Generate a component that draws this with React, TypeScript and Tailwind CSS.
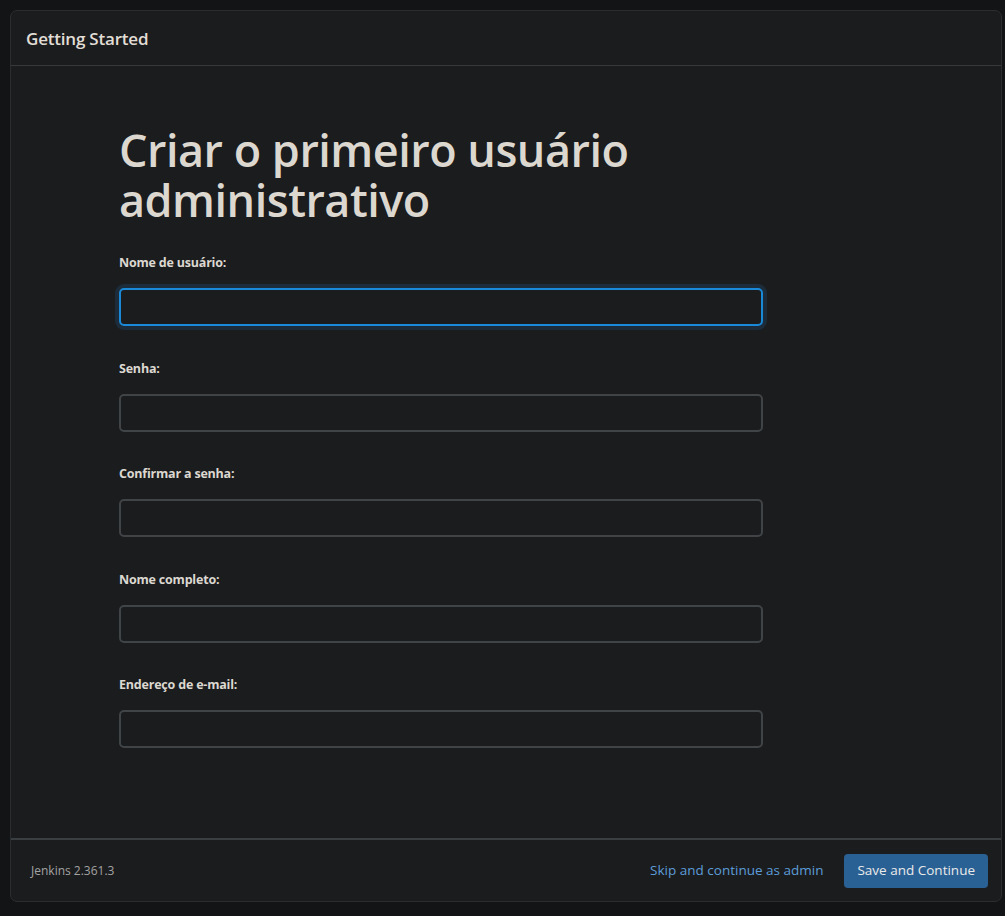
import React from "react";

const fields = [
  { label: "Nome de usuário:", type: "text", focus: true },
  { label: "Senha:", type: "password" },
  { label: "Confirmar a senha:", type: "password" },
  { label: "Nome completo:", type: "text" },
  { label: "Endereço de e-mail:", type: "email" },
];

export default function App() {
  return (
    <div
      className="min-h-screen bg-[#131416] p-[10px] pr-[3px] pb-[14px]"
      style={{ fontFamily: "'Open Sans', 'Noto Sans', sans-serif" }}
    >
      <div className="h-[892px] flex flex-col bg-[#1b1c1e] border border-[#2c2d2f] rounded-[7px]">
        <div className="h-[55px] flex items-center px-[15px] pt-[2px] border-b border-[#37393b]">
          <h1 className="text-[17px] font-semibold text-[#e2ded6] tracking-[-0.2px]">Getting Started</h1>
        </div>

        <div className="flex-1 pl-[108px] pt-[59px]">
          <h2 className="text-[45px] leading-[50px] font-semibold text-[#dcd8d0] tracking-[-0.5px] max-w-[600px]">
            Criar o primeiro usuário administrativo
          </h2>

          <form className="mt-[29px] w-[644px] flex flex-col gap-[33.5px]">
            {fields.map((f) => (
              <div key={f.label} className="flex flex-col">
                <label className="text-[12.5px] font-bold text-[#dcd8d0] leading-[18px] mb-[16px] tracking-[-0.2px]">
                  {f.label}
                </label>
                <input
                  type={f.type}
                  className={
                    f.focus
                      ? "h-[38px] w-full rounded-[5px] bg-[#1b1c1e] border-2 border-[#1a8ad8] shadow-[0_0_0_4px_#1c2c3a] outline-none px-3 text-[#dcd8d0]"
                      : "h-[38px] w-full rounded-[5px] bg-[#1b1c1e] border-2 border-[#404446] outline-none px-3 text-[#dcd8d0]"
                  }
                />
              </div>
            ))}
          </form>
        </div>

        <div className="h-[63px] flex items-center justify-between pl-[20px] pr-[13px] border-t-2 border-[#3a3e40]">
          <span className="text-[12px] text-[#a3a3a3]">Jenkins 2.361.3</span>
          <div className="flex items-center gap-[21px]">
            <a className="text-[13.5px] text-[#5b9cd9] cursor-pointer">Skip and continue as admin</a>
            <button className="h-[34px] px-[13px] rounded-[4px] bg-[#2a6194] text-[13.5px] text-[#eaeaea]">
              Save and Continue
            </button>
          </div>
        </div>
      </div>
    </div>
  );
}
